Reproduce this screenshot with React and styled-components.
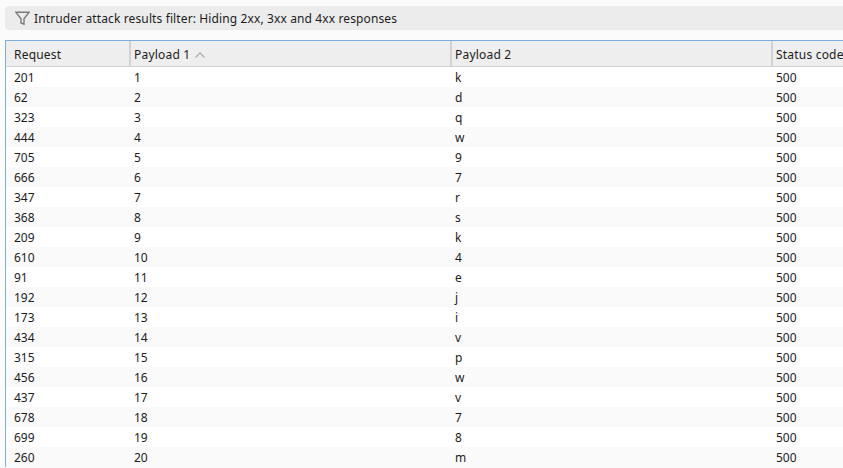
import React from 'react'
import styled, { createGlobalStyle } from 'styled-components'

const GlobalStyle = createGlobalStyle`
  html, body {
    margin: 0;
    background: #fbfbfb;
    overflow: hidden;
  }
`

const Page = styled.div`
  width: 843px;
  height: 468px;
  overflow: hidden;
  padding: 6px 0 0 5px;
  box-sizing: border-box;
  font-family: "Noto Sans", "Open Sans", sans-serif;
  font-size: 12px;
  color: #1c1c1c;
`

const FilterBar = styled.div`
  display: flex;
  align-items: center;
  gap: 4px;
  height: 24px;
  width: 860px;
  padding-left: 10px;
  box-sizing: border-box;
  background: #ececec;
  border-radius: 4px;
  letter-spacing: 0.12px;
`

const Table = styled.div`
  margin-top: 10px;
  width: 860px;
  border-top: 1px solid #7db0de;
  border-left: 1px solid #7db0de;
`

const columns = '124px 321px 321px 100px'

const Header = styled.div`
  display: grid;
  grid-template-columns: ${columns};
  height: 25px;
  background: #eeeeee;
  border-bottom: 1px solid #d2d2d2;
  letter-spacing: 0.2px;
`

const HeaderCell = styled.div`
  display: flex;
  align-items: center;
  gap: 5px;
  padding: 2px 0 0 ${props => (props.$first ? '8px' : '3px')};
  border-left: ${props => (props.$first ? 'none' : '2px solid #d2d2d2')};
  margin-left: ${props => (props.$first ? '0' : '-1px')};
  white-space: nowrap;
`

const Row = styled.div`
  display: grid;
  grid-template-columns: ${columns};
  height: 20px;
  align-items: center;
  background: ${props => (props.$even ? '#fafafa' : '#ffffff')};
`

const Cell = styled.div`
  padding-left: ${props => (props.$first ? '8px' : '4px')};
  white-space: nowrap;
`

const rows = [
  [201, 'k'], [62, 'd'], [323, 'q'], [444, 'w'], [705, '9'],
  [666, '7'], [347, 'r'], [368, 's'], [209, 'k'], [610, '4'],
  [91, 'e'], [192, 'j'], [173, 'i'], [434, 'v'], [315, 'p'],
  [456, 'w'], [437, 'v'], [678, '7'], [699, '8'], [260, 'm'],
]

function FilterIcon() {
  return (
    <svg width="15" height="15" viewBox="0 0 15 15" fill="none" stroke="#7a7a7a" strokeWidth="1.4">
      <path d="M0.8 1.2h13.4L9 7.8v5.4L6 12V7.8z" />
    </svg>
  )
}

function SortArrow() {
  return (
    <svg width="10" height="6" viewBox="0 0 10 6" fill="none" stroke="#adadad" strokeWidth="1.3">
      <path d="M0.5 5.5L5 1l4.5 4.5" />
    </svg>
  )
}

export default function App() {
  return (
    <Page>
      <GlobalStyle />
      <FilterBar>
        <FilterIcon />
        Intruder attack results filter: Hiding 2xx, 3xx and 4xx responses
      </FilterBar>
      <Table>
        <Header>
          <HeaderCell $first>Request</HeaderCell>
          <HeaderCell>Payload 1 <SortArrow /></HeaderCell>
          <HeaderCell>Payload 2</HeaderCell>
          <HeaderCell>Status code</HeaderCell>
        </Header>
        {rows.map(([request, payload], i) => (
          <Row key={request} $even={i % 2 === 1}>
            <Cell $first>{request}</Cell>
            <Cell>{i + 1}</Cell>
            <Cell>{payload}</Cell>
            <Cell>500</Cell>
          </Row>
        ))}
      </Table>
    </Page>
  )
}
